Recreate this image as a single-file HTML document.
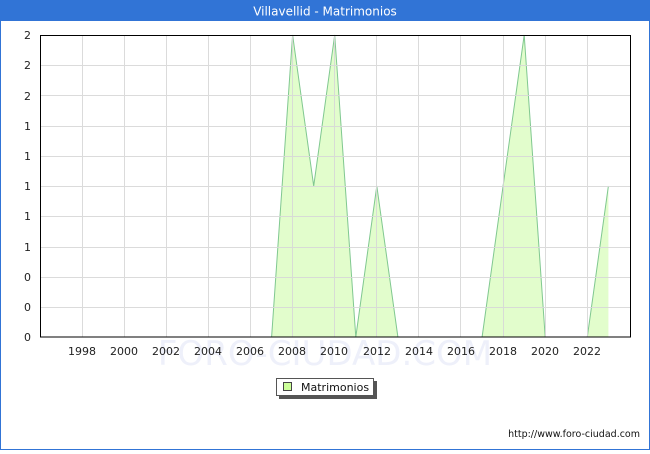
<!DOCTYPE html>
<html><head><meta charset="utf-8"><style>
body{margin:0;width:650px;height:450px;overflow:hidden;font-family:"DejaVu Sans","Liberation Sans",sans-serif}
</style></head><body>
<svg width="650" height="450" xmlns="http://www.w3.org/2000/svg" font-family="DejaVu Sans, Liberation Sans, sans-serif">
<rect x="0" y="0" width="650" height="450" fill="#fff"/>
<rect x="0.5" y="0.5" width="649" height="449" fill="none" stroke="#3174d6"/>
<rect x="0" y="0" width="650" height="21" fill="#3174d6"/>
<text x="325" y="15.5" font-size="12" fill="#fff" text-anchor="middle">Villavellid - Matrimonios</text>
<text x="325" y="365" font-size="34" fill="#eef0fa" text-anchor="middle">FORO-CIUDAD.COM</text>
<polygon points="271.6,337 292.6,35 313.7,186 334.7,35 355.8,337 376.8,186 397.9,337" fill="#e2fdcc" stroke="#80c890"/>
<polygon points="482.1,337 503.1,186 524.2,35 545.2,337" fill="#e2fdcc" stroke="#80c890"/>
<polygon points="587.3,337 608.4,186 608.4,337" fill="#e2fdcc" stroke="none"/>
<polyline points="587.3,337 608.4,186" fill="none" stroke="#80c890"/>
<g stroke="#d8d8d8" stroke-width="1" opacity="0.9">
<line x1="40" y1="65.5" x2="630" y2="65.5"/><line x1="40" y1="95.5" x2="630" y2="95.5"/><line x1="40" y1="126.5" x2="630" y2="126.5"/><line x1="40" y1="156.5" x2="630" y2="156.5"/><line x1="40" y1="186.5" x2="630" y2="186.5"/><line x1="40" y1="216.5" x2="630" y2="216.5"/><line x1="40" y1="247.5" x2="630" y2="247.5"/><line x1="40" y1="277.5" x2="630" y2="277.5"/><line x1="40" y1="307.5" x2="630" y2="307.5"/>
<line x1="82.5" y1="35" x2="82.5" y2="337"/><line x1="124.5" y1="35" x2="124.5" y2="337"/><line x1="166.5" y1="35" x2="166.5" y2="337"/><line x1="208.5" y1="35" x2="208.5" y2="337"/><line x1="250.5" y1="35" x2="250.5" y2="337"/><line x1="292.5" y1="35" x2="292.5" y2="337"/><line x1="334.5" y1="35" x2="334.5" y2="337"/><line x1="376.5" y1="35" x2="376.5" y2="337"/><line x1="418.5" y1="35" x2="418.5" y2="337"/><line x1="460.5" y1="35" x2="460.5" y2="337"/><line x1="503.5" y1="35" x2="503.5" y2="337"/><line x1="545.5" y1="35" x2="545.5" y2="337"/><line x1="587.5" y1="35" x2="587.5" y2="337"/>
</g>
<rect x="40.5" y="35.5" width="590" height="301.5" fill="none" stroke="#000"/>
<g font-size="11" fill="#222" text-anchor="end">
<text x="31" y="39">2</text><text x="31" y="69">2</text><text x="31" y="100">2</text><text x="31" y="130">1</text><text x="31" y="160">1</text><text x="31" y="190">1</text><text x="31" y="220">1</text><text x="31" y="251">1</text><text x="31" y="281">0</text><text x="31" y="311">0</text><text x="31" y="341">0</text>
</g>
<g font-size="11" fill="#222" text-anchor="middle">
<text x="82" y="355">1998</text><text x="124" y="355">2000</text><text x="166" y="355">2002</text><text x="208" y="355">2004</text><text x="250" y="355">2006</text><text x="292" y="355">2008</text><text x="334" y="355">2010</text><text x="377" y="355">2012</text><text x="419" y="355">2014</text><text x="461" y="355">2016</text><text x="503" y="355">2018</text><text x="545" y="355">2020</text><text x="587" y="355">2022</text>
</g>
<rect x="279" y="381" width="98" height="18" fill="#555"/>
<rect x="276.5" y="378.5" width="97" height="17" fill="#fff" stroke="#555"/>
<rect x="283.5" y="382.5" width="8" height="8" fill="#ccff99" stroke="#444"/>
<text x="301" y="391" font-size="11" fill="#111">Matrimonios</text>
<text x="640" y="437" font-size="9.5" fill="#111" text-anchor="end">http://www.foro-ciudad.com</text>
</svg>
</body></html>
